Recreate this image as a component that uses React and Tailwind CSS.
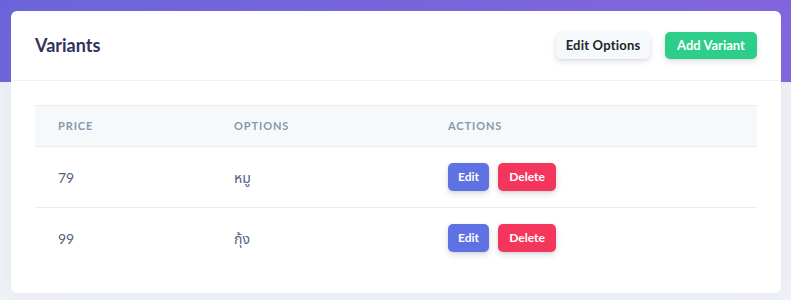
const rows = [
  { price: 79, option: 'หมู' },
  { price: 99, option: 'กุ้ง' },
];

export default function App() {
  return (
    <div
      className="relative h-[300px] w-full overflow-hidden bg-[#f1f3f9] text-[#525f7f]"
      style={{ fontFamily: 'Lato, "Noto Sans", "Noto Sans Thai", sans-serif' }}
    >
      <div className="absolute inset-x-0 top-0 h-[82px] bg-gradient-to-r from-[#6a63dd] to-[#8463e1]" />

      <div className="relative pl-[11px] pr-[10px] pt-[11px]">
        <div className="rounded-md bg-white shadow-[0_0_2rem_0_rgba(136,152,170,0.15)]">
          {/* card header */}
          <div className="flex h-[70px] items-center justify-between border-b border-[#eef0f3] px-6">
            <h3 className="text-[18px] font-bold text-[#32325d]">Variants</h3>
            <div className="flex items-center gap-[15px]">
              <button className="h-[27px] w-[94px] rounded-[5px] bg-[#f6f9fc] text-[13px] font-bold tracking-[0.2px] text-[#212529] shadow-[0_3px_6px_rgba(50,50,93,0.12),0_1px_3px_rgba(0,0,0,0.06)]">
                Edit Options
              </button>
              <button className="h-[27px] w-[92px] rounded-[5px] bg-[#2dce89] text-[13px] font-bold text-white shadow-[0_3px_6px_rgba(50,50,93,0.12),0_1px_3px_rgba(0,0,0,0.06)]">
                Add Variant
              </button>
            </div>
          </div>

          {/* card body */}
          <div className="p-6">
            <table className="w-full border-collapse text-left">
              <thead>
                <tr className="h-[41px] border-y border-[#e9ecef] bg-[#f6f9fc] text-[11px] font-bold uppercase tracking-[0.9px] text-[#8898aa]">
                  <th className="w-[199px] pl-[23px] font-bold">Price</th>
                  <th className="w-[214px] font-bold">Options</th>
                  <th className="font-bold">Actions</th>
                </tr>
              </thead>
              <tbody>
                {rows.map((r, i) => (
                  <tr key={r.price} className={`h-[61px] ${i > 0 ? 'border-t border-[#e9ecef]' : ''}`}>
                    <td className="pl-[23px] text-[14px]">{r.price}</td>
                    <td className="text-[14px]">{r.option}</td>
                    <td>
                      <div className="flex items-center gap-[9px]">
                        <button className="h-[28px] w-[41px] rounded-[5px] bg-[#5e72e4] text-[12px] font-bold text-white shadow-[0_3px_6px_rgba(50,50,93,0.15),0_1px_3px_rgba(0,0,0,0.08)]">
                          Edit
                        </button>
                        <button className="h-[28px] w-[58px] rounded-[5px] bg-[#f5365c] text-[12px] font-bold text-white shadow-[0_3px_6px_rgba(50,50,93,0.15),0_1px_3px_rgba(0,0,0,0.08)]">
                          Delete
                        </button>
                      </div>
                    </td>
                  </tr>
                ))}
              </tbody>
            </table>
          </div>
        </div>
      </div>
    </div>
  );
}
